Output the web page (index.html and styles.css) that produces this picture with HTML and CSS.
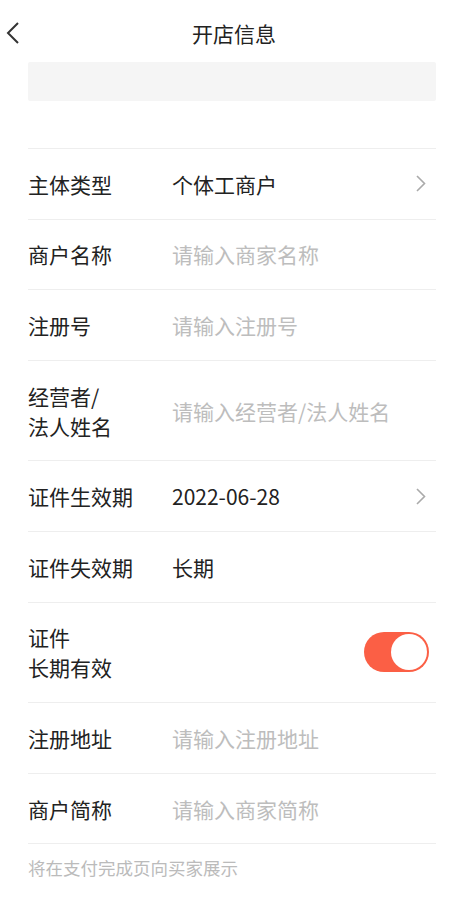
FILE: index.html
```html
<!DOCTYPE html>
<html lang="zh-CN">
<head>
  <meta charset="UTF-8">
  <meta name="viewport" content="width=device-width, initial-scale=1.0">
  <title>开店信息</title>
  <link rel="stylesheet" href="styles.css">
</head>
<body>
  <div class="header">
    <span class="back">
      <svg width="14" height="22" viewBox="0 0 14 22"><path d="M12 1 L2 11 L12 21" fill="none" stroke="#333" stroke-width="2"/></svg>
    </span>
    <h1>开店信息</h1>
  </div>

  <div class="banner"></div>

  <div class="form">
    <div class="row">
      <div class="label">主体类型</div>
      <div class="value">个体工商户</div>
      <span class="arrow"><svg width="10" height="17" viewBox="0 0 10 17"><path d="M1 1 L8.5 8.5 L1 16" fill="none" stroke="#aaa" stroke-width="1.6"/></svg></span>
    </div>
    <div class="row">
      <div class="label">商户名称</div>
      <input class="value" type="text" placeholder="请输入商家名称">
    </div>
    <div class="row">
      <div class="label">注册号</div>
      <input class="value" type="text" placeholder="请输入注册号">
    </div>
    <div class="row tall">
      <div class="label">经营者/<br>法人姓名</div>
      <input class="value" type="text" placeholder="请输入经营者/法人姓名">
    </div>
    <div class="row">
      <div class="label">证件生效期</div>
      <div class="value">2022-06-28</div>
      <span class="arrow"><svg width="10" height="17" viewBox="0 0 10 17"><path d="M1 1 L8.5 8.5 L1 16" fill="none" stroke="#aaa" stroke-width="1.6"/></svg></span>
    </div>
    <div class="row">
      <div class="label">证件失效期</div>
      <div class="value">长期</div>
    </div>
    <div class="row tall">
      <div class="label">证件<br>长期有效</div>
      <div class="value"></div>
      <span class="switch on"><span class="knob"></span></span>
    </div>
    <div class="row">
      <div class="label">注册地址</div>
      <input class="value" type="text" placeholder="请输入注册地址">
    </div>
    <div class="row">
      <div class="label">商户简称</div>
      <input class="value" type="text" placeholder="请输入商家简称">
    </div>
  </div>
  <p class="tip">将在支付完成页向买家展示</p>
</body>
</html>
```

FILE: styles.css
```css
* { box-sizing: border-box; }
body {
  margin: 0;
  background: #fff;
  color: #222;
  font-family: "Noto Sans CJK SC", "Noto Sans", sans-serif;
}
.header {
  height: 62px;
  padding-top: 4px;
  display: flex;
  align-items: center;
  justify-content: center;
  position: relative;
}
.header h1 {
  margin: 0;
  font-size: 21px;
  font-weight: normal;
  color: #222;
}
.back {
  position: absolute;
  left: 6px;
  top: 22px;
  display: flex;
}
.banner {
  margin: 0 32px 0 28px;
  height: 39px;
  background: #f5f5f5;
  border-radius: 2px;
}
.form {
  margin: 47px 32px 0 28px;
  border-bottom: 1px solid #eee;
}
.row {
  display: flex;
  align-items: center;
  height: 70.6px;
  border-top: 1px solid #eee;
  font-size: 21px;
}
.row.tall { height: 100.6px; }
.label {
  width: 144px;
  flex-shrink: 0;
  line-height: 30px;
  color: #222;
}
.value {
  flex: 1;
  min-width: 0;
  color: #222;
}
input.value {
  border: none;
  outline: none;
  padding: 0;
  font-size: 21px;
  font-family: inherit;
  color: #222;
  background: transparent;
}
input.value::placeholder { color: #bdbdbd; }
.arrow {
  display: flex;
  margin-right: 10px;
}
.switch {
  width: 65px;
  height: 40px;
  border-radius: 20px;
  background: #fb5f45;
  margin-right: 7px;
  padding: 2px;
  display: flex;
  justify-content: flex-end;
}
.knob {
  width: 36px;
  height: 36px;
  border-radius: 50%;
  background: #fff;
}
.tip {
  margin: 12px 32px 0 28px;
  font-size: 17.5px;
  color: #bbb;
  line-height: 24px;
}
```
